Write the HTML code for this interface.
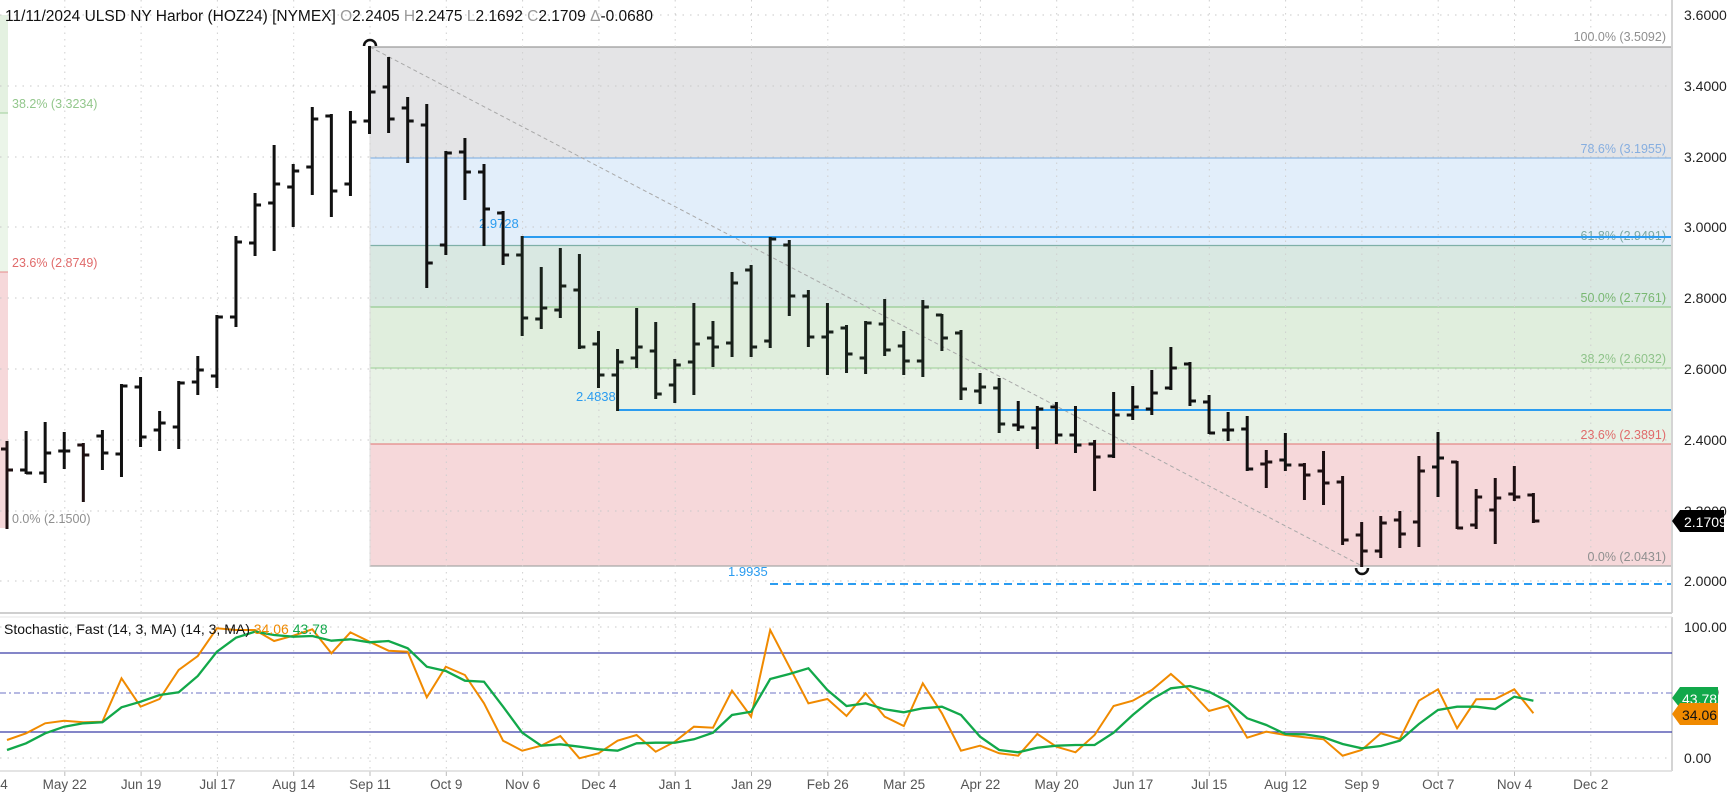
<!DOCTYPE html>
<html><head><meta charset="utf-8">
<style>
html,body{margin:0;padding:0;background:#fff;}
body{width:1729px;height:798px;overflow:hidden;font-family:"Liberation Sans",sans-serif;}
svg text{font-family:"Liberation Sans",sans-serif;}
</style></head>
<body>
<svg id="c" width="1729" height="798" viewBox="0 0 1729 798" xmlns="http://www.w3.org/2000/svg">
<rect width="1729" height="798" fill="#fff"/>
<!-- left fib band -->
<rect x="0" y="15" width="8" height="98" fill="#e4f1e1"/>
<rect x="0" y="113" width="8" height="159" fill="#ebf5e9"/>
<rect x="0" y="272" width="8" height="256" fill="#f6d8da"/>
<line x1="0" y1="113" x2="8" y2="113" stroke="#9fd09a"/>
<line x1="0" y1="272" x2="8" y2="272" stroke="#e58a8a"/>
<!-- right fib regions -->
<rect x="370" y="47" width="1302" height="111" fill="#e4e4e6"/>
<rect x="370" y="158" width="1302" height="87.5" fill="#e2eefa"/>
<rect x="370" y="245.5" width="1302" height="61.5" fill="#d9e8e2"/>
<rect x="370" y="307" width="1302" height="61" fill="#e0eedd"/>
<rect x="370" y="368" width="1302" height="76" fill="#e8f2e6"/>
<rect x="370" y="444" width="1302" height="122" fill="#f6d8da"/>
<g stroke-width="1.3">
<line x1="370" y1="47" x2="1672" y2="47" stroke="#9a9a9a"/>
<line x1="370" y1="158" x2="1672" y2="158" stroke="#8db6e4"/>
<line x1="370" y1="245.5" x2="1672" y2="245.5" stroke="#7fb0a8"/>
<line x1="370" y1="307" x2="1672" y2="307" stroke="#96cc92"/>
<line x1="370" y1="368" x2="1672" y2="368" stroke="#a9d6a4"/>
<line x1="370" y1="444" x2="1672" y2="444" stroke="#e48888"/>
<line x1="370" y1="566" x2="1672" y2="566" stroke="#a8a8a8"/>
</g>
<line x1="370" y1="47" x2="370" y2="566" stroke="#dcdcdc"/>
<g id="grid"></g>
<!-- fib labels -->
<g font-size="12.5" text-anchor="end">
<text x="1666" y="41" fill="#8f8f8f">100.0% (3.5092)</text>
<text x="1666" y="153" fill="#86aee0">78.6% (3.1955)</text>
<text x="1666" y="240" fill="#7aa8a0">61.8% (2.9491)</text>
<text x="1666" y="302" fill="#79b872">50.0% (2.7761)</text>
<text x="1666" y="363" fill="#8fc38a">38.2% (2.6032)</text>
<text x="1666" y="439" fill="#e06b6b">23.6% (2.3891)</text>
<text x="1666" y="561" fill="#8f8f8f">0.0% (2.0431)</text>
</g>
<g font-size="12.5">
<text x="12" y="108" fill="#93c78c">38.2% (3.3234)</text>
<text x="12" y="267" fill="#e06b6b">23.6% (2.8749)</text>
<text x="12" y="523" fill="#8f8f8f">0.0% (2.1500)</text>
</g>
<!-- diagonal -->
<line x1="370" y1="47" x2="1362" y2="566" stroke="#a9a9a9" stroke-dasharray="4,3"/>
<!-- blue lines -->
<line x1="522" y1="237" x2="1672" y2="237" stroke="#2b9cf0" stroke-width="2"/>
<line x1="618" y1="410" x2="1672" y2="410" stroke="#2b9cf0" stroke-width="2"/>
<line x1="770" y1="584" x2="1672" y2="584" stroke="#2b9cf0" stroke-width="2" stroke-dasharray="8,5"/>
<g font-size="13" fill="#2b9cf0">
<text x="479" y="228">2.9728</text>
<text x="576" y="401">2.4838</text>
<text x="728" y="576">1.9935</text>
</g>
<g id="bars"></g>
<path d="M364,46 A6,6 0 0 1 376,46" fill="none" stroke="#111" stroke-width="2.5"/>
<path d="M1356,568 A6,6 0 0 0 1368,568" fill="none" stroke="#111" stroke-width="2.5"/>
<!-- frames -->
<line x1="1672" y1="0" x2="1672" y2="613" stroke="#d4d4d4" stroke-width="2"/>
<line x1="1672" y1="617" x2="1672" y2="771" stroke="#d4d4d4" stroke-width="2"/>
<line x1="0" y1="613" x2="1672" y2="613" stroke="#cfcfcf" stroke-width="2"/>
<line x1="0" y1="617" x2="1672" y2="617" stroke="#e4e4e4" stroke-width="1"/>
<line x1="0" y1="771" x2="1672" y2="771" stroke="#dcdcdc" stroke-width="1.5"/>
<!-- header -->
<text x="5" y="21" font-size="15.5" fill="#111">11/11/2024 ULSD NY Harbor (HOZ24) [NYMEX] <tspan fill="#999">O</tspan>2.2405 <tspan fill="#999">H</tspan>2.2475 <tspan fill="#999">L</tspan>2.1692 <tspan fill="#999">C</tspan>2.1709 <tspan fill="#999">Δ</tspan>-0.0680</text>
<!-- price axis -->
<g font-size="14" fill="#222" id="axis"></g>
<!-- stochastic -->
<line x1="0" y1="653" x2="1672" y2="653" stroke="#3a3fa8" stroke-width="1.3"/>
<line x1="0" y1="732" x2="1672" y2="732" stroke="#3a3fa8" stroke-width="1.3"/>
<line x1="0" y1="693" x2="1672" y2="693" stroke="#8a8fd0" stroke-width="1.3" stroke-dasharray="6,3,2,3"/>
<g id="stoch"></g>
<text x="4" y="634" font-size="14" fill="#111">Stochastic, Fast (14, 3, MA)  (14, 3, MA) <tspan fill="#f08a00">34.06</tspan> <tspan fill="#13a84a">43.78</tspan></text>
<g font-size="14" fill="#222">
<text x="1684" y="632">100.00</text>
<text x="1684" y="697">50.00</text>
<text x="1684" y="763">0.00</text>
</g>
<!-- tags -->
<path d="M1672,521 L1680,510 L1724,510 L1724,532 L1680,532 Z" fill="#000"/>
<text x="1684" y="527" font-size="14" fill="#fff">2.1709</text>
<path d="M1672,698 L1680,687 L1718,687 L1718,708 L1680,708 Z" fill="#12a84a"/>
<text x="1682" y="704" font-size="14" fill="#fff">43.78</text>
<path d="M1672,714 L1680,703 L1718,703 L1718,725 L1680,725 Z" fill="#f08a00"/>
<text x="1682" y="720" font-size="14" fill="#111">34.06</text>
<g id="dates" font-size="13.5" fill="#555" text-anchor="middle"></g>
</svg>
<script>
var NS="http://www.w3.org/2000/svg";
function el(p,t,a,txt){var e=document.createElementNS(NS,t);for(var k in a)e.setAttribute(k,a[k]);if(txt)e.textContent=txt;document.getElementById(p).appendChild(e);return e;}
// grid
var py=[15,86,157,227,298,369,440,511,581];
py.forEach(function(y){el("grid","line",{x1:0,y1:y,x2:1672,y2:y,stroke:"#c8c8c8","stroke-dasharray":"1.5,6"});});
[627,758].forEach(function(y){el("grid","line",{x1:0,y1:y,x2:1672,y2:y,stroke:"#c8c8c8","stroke-dasharray":"1.5,6"});});
var names=["4","May 22","Jun 19","Jul 17","Aug 14","Sep 11","Oct 9","Nov 6","Dec 4","Jan 1","Jan 29","Feb 26","Mar 25","Apr 22","May 20","Jun 17","Jul 15","Aug 12","Sep 9","Oct 7","Nov 4","Dec 2"];
for(var k=0;k<names.length;k++){var x=370+(k-5)*76.3;
 el("grid","line",{x1:x,y1:0,x2:x,y2:771,stroke:"#cfcfcf","stroke-dasharray":"1.5,5"});
 el("grid","line",{x1:x,y1:771,x2:x,y2:776,stroke:"#bbb"});
 el("dates","text",{x:(k==0?4:x),y:789},names[k]);}
var labs=["3.6000","3.4000","3.2000","3.0000","2.8000","2.6000","2.4000","2.2000","2.0000"];
labs.forEach(function(l,i){el("axis","text",{x:1684,y:py[i]+5},l);});
// bars [h,l,o,c]
var B=[[442,528,449,470],[432,473,470,473],[423,482,473,453],[433,468,451,451],[444,501,445,455],[431,469,436,453],[385,476,454,386],[378,446,387,437],[412,450,430,423],[382,448,427,383],
[357,394,382,370],[316,387,376,317],[237,326,317,242],[194,255,243,205],[146,250,203,184],[165,226,187,171],[108,194,167,119],[115,216,116,191],[112,195,184,122],[47,133,121,92],
[58,132,87,119],[98,162,108,121],[105,287,125,263],[152,254,245,153],[139,199,152,172],[165,245,172,209],[212,264,213,255],[237,335,255,318],[268,328,319,308],[249,317,310,286],
[255,348,290,347],[332,387,344,375],[350,410,375,362],[309,367,358,347],[323,398,351,394],[360,402,385,365],[304,394,362,344],[322,366,338,347],[273,356,343,283],[266,356,270,347],
[238,347,341,239],[241,315,245,296],[291,346,296,337],[304,374,337,332],[326,372,328,354],[322,373,358,323],[300,355,324,350],[332,374,346,361],[301,376,361,307],[315,350,315,338],
[331,399,333,389],[374,403,391,387],[379,432,388,424],[402,430,425,427],[407,448,428,409],[403,443,407,435],[407,452,435,445],[441,490,444,457],[393,457,456,415],[387,419,415,407],
[371,414,409,393],[348,389,388,368],[363,405,364,401],[396,433,402,433],[413,440,430,430],[417,470,429,469],[451,487,464,462],[434,470,460,465],[464,499,465,475],[452,504,471,483],
[477,544,482,540],[523,566,535,551],[517,557,551,523],[512,547,520,534],[457,546,522,471],[433,496,467,458],[462,528,462,528],[490,528,525,497],[479,543,510,498],[467,500,494,497],[494,522,495,521]];
B.forEach(function(b,i){var x=7+i*19.08;var col=(b[1]>444&&b[0]>440)?"#1e1012":"#111";
 var s={stroke:i>26&&i<53?"#18201a":col,"stroke-width":3};
 el("bars","line",Object.assign({x1:x,y1:b[0]-1,x2:x,y2:b[1]+1},s));
 el("bars","line",Object.assign({x1:x-6,y1:b[2],x2:x,y2:b[2]},s));
 el("bars","line",Object.assign({x1:x,y1:b[3],x2:x+6,y2:b[3]},s));});
// stochastic
var O=[420,400,370,362,367,365,235,320,297,210,168,85,90,90,123,107,88,160,97,125,152,155,292,200,225,310,422,452,437,408,475,460,422,405,455,425,380,383,272,350,90,200,310,297,348,
280,350,378,250,340,452,437,460,467,402,440,457,405,318,302,270,222,272,333,317,413,395,405,412,418,467,450,400,417,302,268,385,298,297,268,340];
var G=[450,430,400,380,370,367,322,305,285,277,228,155,113,95,105,110,108,122,118,127,123,145,200,213,242,245,320,398,437,433,440,448,452,430,428,428,418,398,345,335,237,222,205,270,318,
310,328,337,325,320,345,410,450,457,443,437,435,435,398,345,298,265,258,275,305,355,375,402,403,412,432,445,438,422,372,330,320,320,327,290,302];
function pts(a){return a.map(function(Y,i){return (7+i*19.08).toFixed(1)+","+(600+Y/3).toFixed(1);}).join(" ");}
el("stoch","polyline",{points:pts(O),fill:"none",stroke:"#f08a00","stroke-width":2});
el("stoch","polyline",{points:pts(G),fill:"none",stroke:"#12a84a","stroke-width":2.3});
</script>
</body></html>
